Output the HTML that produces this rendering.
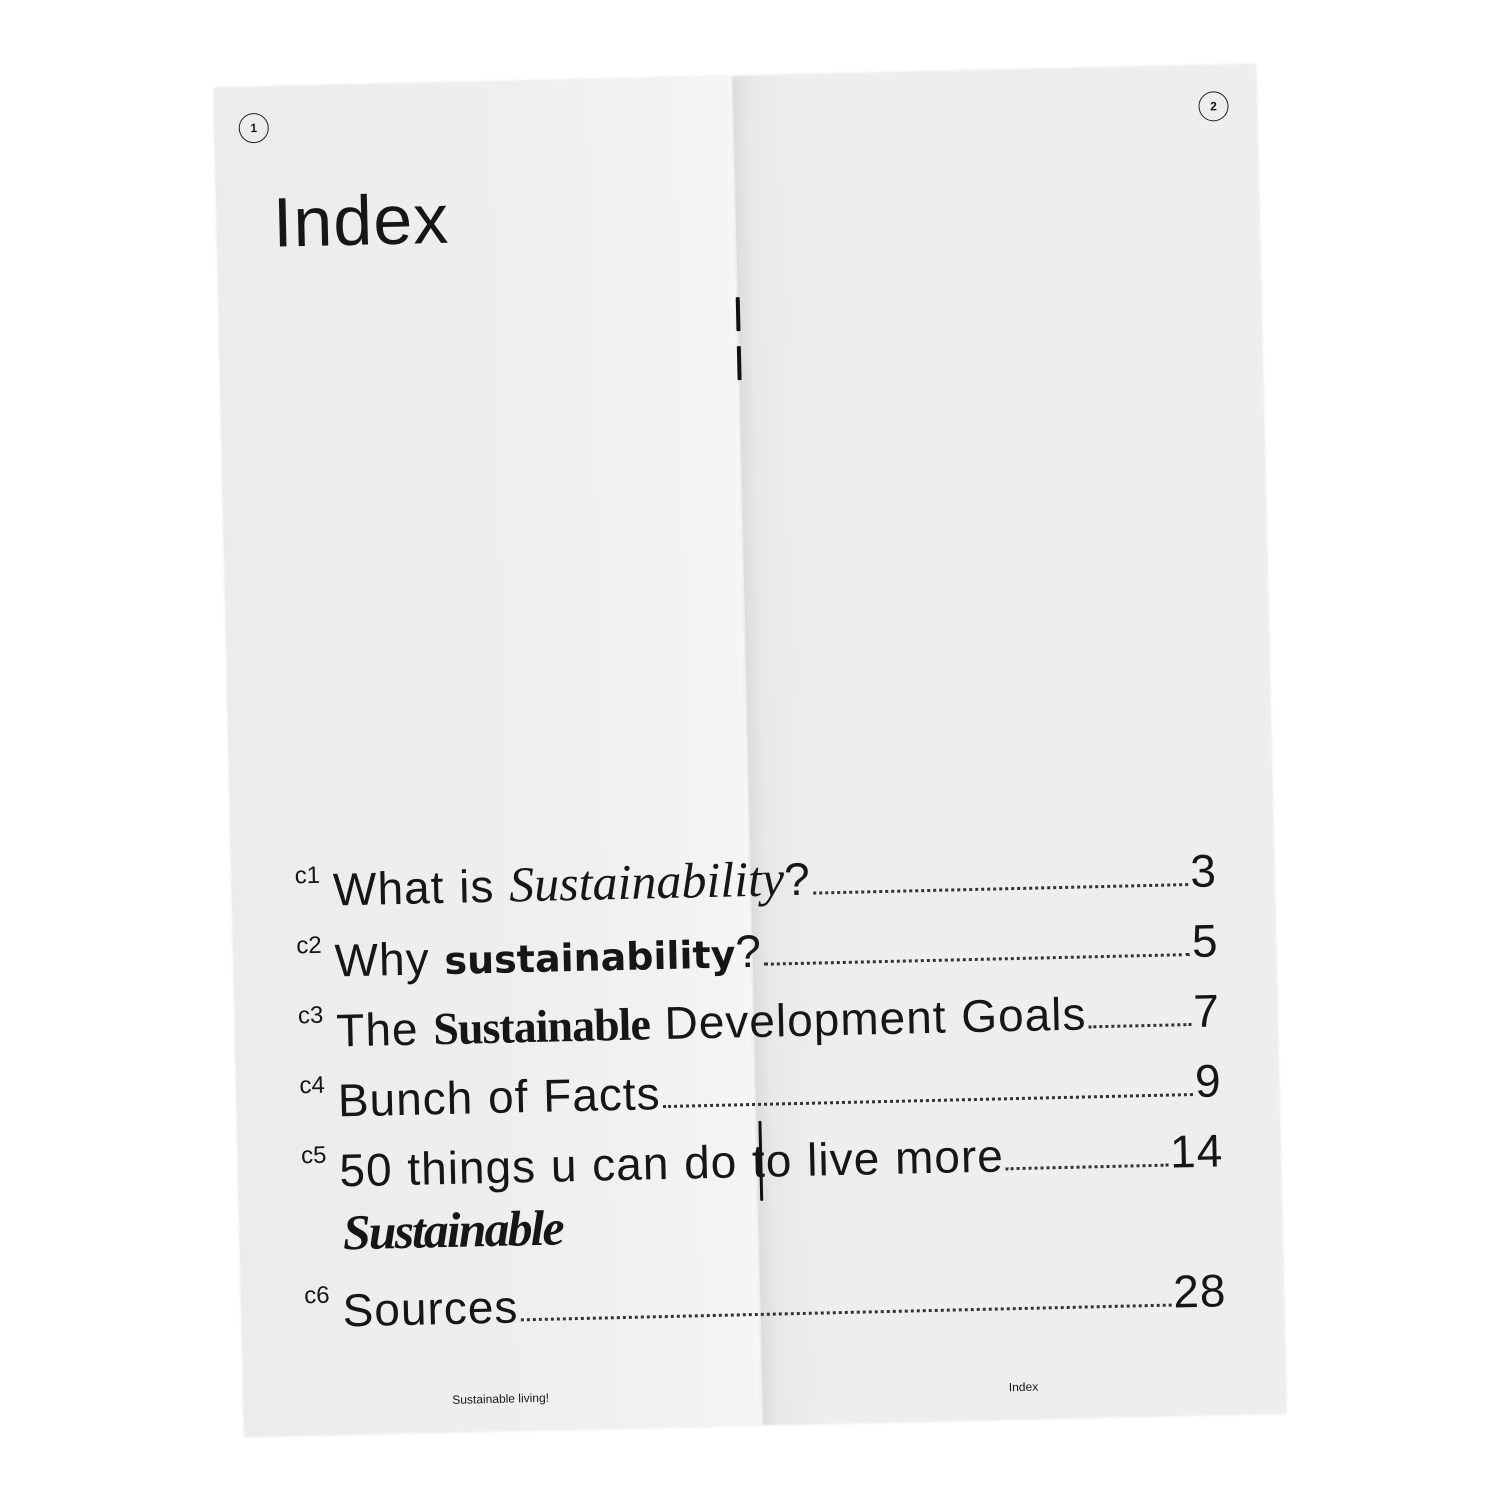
<!DOCTYPE html>
<html><head><meta charset="utf-8"><style>
html,body{margin:0;padding:0;background:#fff;width:1500px;height:1500px;overflow:hidden}
#book{position:absolute;left:229px;top:75.5px;width:1042px;height:1349px;transform:rotate(-1.3deg);transform-origin:521px 674.5px;font-family:"Liberation Sans",sans-serif;color:#161616}
.pl{position:absolute;left:0;top:0;width:519px;height:1349px;background:linear-gradient(90deg,#ececec 0%,#efefef 60%,#f3f3f3 92%,#f6f6f6 100%);box-shadow:0 0 3px rgba(0,0,0,.12)}
.pr{position:absolute;left:519px;top:0;width:523px;height:1349px;background:linear-gradient(90deg,#dcdcdc 0%,#e8e8e8 3%,#eeeeee 12%,#eeeeee 100%);box-shadow:0 0 3px rgba(0,0,0,.12)}
.circ{position:absolute;width:28px;height:28px;border:1.6px solid #222;border-radius:50%;font-size:12px;font-weight:bold;text-align:center;line-height:28px}
.staple{position:absolute;left:517px;width:4px;background:#111;border-radius:1px}
.row{position:absolute;left:63px;width:922px;height:60px;display:flex;align-items:flex-end;font-size:46px;white-space:nowrap;letter-spacing:1px;word-spacing:1px}
.c{font-size:24px;width:38px;align-self:flex-start;margin-top:4px;letter-spacing:0}
.lead{flex:1;border-bottom:3px dotted #333;margin:0 2px 12px 2px;height:0}
.foot{position:absolute;font-size:12px;transform:translateX(-50%)}
</style></head><body>
<div id="book">
<div class="pl"></div><div class="pr"></div>
<div class="circ" style="left:24px;top:26px">1</div>
<div class="circ" style="left:984px;top:26px">2</div>
<div style="position:absolute;left:56px;top:96px;font-size:70px;letter-spacing:1px">Index</div>
<div class="staple" style="top:221px;height:34px"></div>
<div class="staple" style="top:270px;height:34px"></div>
<div class="staple" style="top:1045px;height:80px;left:521px;width:3px"></div>

<div class="row" style="top:772px"><span class="c">c1</span><span>What is <span style="font-family:'Liberation Serif',serif;font-style:italic;font-size:50px;letter-spacing:0">Sustainability</span>?</span><span class="lead"></span><span>3</span></div>
<div class="row" style="top:842px"><span class="c">c2</span><span>Why <span style="font-family:'DejaVu Sans',sans-serif;font-weight:900;font-size:38px;letter-spacing:0">sustainability</span>?</span><span class="lead"></span><span>5</span></div>
<div class="row" style="top:912px"><span class="c">c3</span><span>The <span style="font-family:'Liberation Serif',serif;font-weight:bold;font-size:46px;letter-spacing:-1px">Sustainable</span> Development Goals</span><span class="lead"></span><span>7</span></div>
<div class="row" style="top:982px"><span class="c">c4</span><span>Bunch of Facts</span><span class="lead"></span><span>9</span></div>
<div class="row" style="top:1052px"><span class="c">c5</span><span>50 things u can do to live more</span><span class="lead"></span><span>14</span></div>
<div style="position:absolute;left:103px;top:1118px;font-family:'Liberation Serif',serif;font-style:italic;font-weight:bold;font-size:50px;letter-spacing:-2px">Sustainable</div>
<div class="row" style="top:1192px"><span class="c">c6</span><span>Sources</span><span class="lead"></span><span>28</span></div>

<div class="foot" style="left:257px;top:1310px">Sustainable living!</div>
<div class="foot" style="left:780px;top:1310px">Index</div>
</div>
</body></html>
